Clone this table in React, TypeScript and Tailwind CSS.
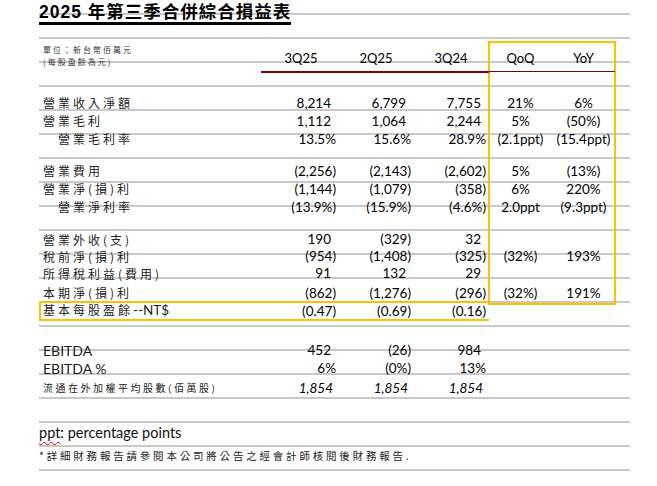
type Row = {
  label: string
  indent?: boolean
  sans?: boolean
  small?: boolean
  italic?: boolean
  values: string[]
  qoq?: string
  yoy?: string
  h: string
  mt?: string
}

const rows: Row[] = [
  { label: '營業收入淨額', values: ['8,214', '6,799', '7,755'], qoq: '21%', yoy: '6%', h: 'h-[18px]', mt: 'mt-[21px]' },
  { label: '營業毛利', values: ['1,112', '1,064', '2,244'], qoq: '5%', yoy: '(50%)', h: 'h-[18px]' },
  { label: '營業毛利率', indent: true, values: ['13.5%', '15.6%', '28.9%'], qoq: '(2.1ppt)', yoy: '(15.4ppt)', h: 'h-[18px]' },
  { label: '營業費用', values: ['(2,256)', '(2,143)', '(2,602)'], qoq: '5%', yoy: '(13%)', h: 'h-[18px]', mt: 'mt-[14px]' },
  { label: '營業淨(損)利', values: ['(1,144)', '(1,079)', '(358)'], qoq: '6%', yoy: '220%', h: 'h-[18px]' },
  { label: '營業淨利率', indent: true, values: ['(13.9%)', '(15.9%)', '(4.6%)'], qoq: '2.0ppt', yoy: '(9.3ppt)', h: 'h-[18px]' },
  { label: '營業外收(支)', values: ['190', '(329)', '32'], h: 'h-[17px]', mt: 'mt-[15px]' },
  { label: '稅前淨(損)利', values: ['(954)', '(1,408)', '(325)'], qoq: '(32%)', yoy: '193%', h: 'h-[17px]' },
  { label: '所得稅利益(費用)', values: ['91', '132', '29'], h: 'h-[17px]' },
  { label: '本期淨(損)利', values: ['(862)', '(1,276)', '(296)'], qoq: '(32%)', yoy: '191%', h: 'h-[16px]', mt: 'mt-[3px]' },
]

const lower: Row[] = [
  { label: 'EBITDA', sans: true, values: ['452', '(26)', '984'], h: 'h-[18px]', mt: 'mt-[20px]' },
  { label: 'EBITDA %', sans: true, values: ['6%', '(0%)', '13%'], h: 'h-[18px]' },
  { label: '流通在外加權平均股數(佰萬股)', small: true, italic: true, values: ['1,854', '1,854', '1,854'], h: 'h-[18px]', mt: 'mt-[2px]' },
]

const cjk = "font-['Noto_Sans_CJK_TC','Liberation_Sans',sans-serif]"

function Num({ value, italic }: { value: string; italic?: boolean }) {
  const tight = value.endsWith(')') || value.endsWith('%')
  const pad = italic ? 'pr-[3px] italic' : tight ? 'pr-0' : 'pr-[5px]'
  return <div className={`w-[75px] text-right ${pad}`}>{value}</div>
}

function Label({ row }: { row: Row }) {
  if (row.sans) {
    return <div className="w-[222px] pl-[4px] text-[14px] text-[#1a1a1a]">{row.label}</div>
  }
  const size = row.small ? 'text-[10px] tracking-[2.5px]' : 'text-[12px] tracking-[3px]'
  return (
    <div className={`w-[222px] ${row.indent ? 'pl-[19px]' : 'pl-[4px]'} ${cjk} ${size} leading-none text-[#222]`}>
      {row.label}
    </div>
  )
}

function DataRow({ row }: { row: Row }) {
  return (
    <div className={`flex items-center ${row.h} ${row.mt ?? ''}`}>
      <Label row={row} />
      {row.values.map((v, i) => (
        <Num key={i} value={v} italic={row.italic} />
      ))}
      <div className="ml-[3px] w-[63px] text-center">{row.qoq ?? ''}</div>
      <div className="w-[63px] text-center">{row.yoy ?? ''}</div>
    </div>
  )
}

export default function App() {
  return (
    <div className="relative h-[486px] w-[657px] overflow-hidden bg-white font-['Lato',sans-serif] text-[13.5px] text-black">
      {/* ruled lines */}
      <div className="absolute left-[39px] top-[13px] h-[458px] w-[591px] bg-[repeating-linear-gradient(to_bottom,#c8c8c8_0,#c8c8c8_2px,transparent_2px,transparent_24px)]" />
      {/* QoQ / YoY highlight */}
      <div className="absolute left-[488px] top-[41px] h-[264px] w-[128px] border-2 border-[#ffc000]" />

      <div className="relative pl-[39px]">
        <div className="pt-[2px]">
          <span className="inline-block border-b-[3px] border-black font-['Liberation_Sans','Noto_Sans_CJK_TC',sans-serif] text-[17.5px] font-bold leading-[20px] tracking-[1px]">
            2025 年第三季合併綜合損益表
          </span>
        </div>

        <div className="mt-[19px] flex items-start">
          <div className={`w-[222px] pl-[4px] ${cjk} text-[8px] leading-[12px] tracking-[2px] text-[#333]`}>
            <div>單位：新台幣佰萬元</div>
            <div>(每股盈餘為元)</div>
          </div>
          <div className="flex h-[29px] border-b-2 border-[#800000] pt-[6px] text-[13px] leading-[16px]">
            <div className="w-[75px] pl-[5px] text-center">3Q25</div>
            <div className="w-[75px] pl-[5px] text-center">2Q25</div>
            <div className="w-[78px] pl-[2px] text-center">3Q24</div>
          </div>
          <div className="flex h-[29px] pt-[6px] text-[13px] leading-[16px]">
            <div className="flex h-[22px] w-[126px] border-b border-[#800000]">
              <div className="w-[63px] text-center">QoQ</div>
              <div className="w-[63px] text-center">YoY</div>
            </div>
          </div>
        </div>

        {rows.map((r, i) => (
          <DataRow key={i} row={r} />
        ))}

        <div className="flex h-[20px] w-[450px] items-center border-y-2 border-l-2 border-[#ffc000]">
          <div className="w-[220px] pl-[2px] leading-none text-[#222]">
            <span className={`${cjk} text-[12px] tracking-[3px]`}>基本每股盈餘</span>
            <span className="text-[13.5px]">--NT$</span>
          </div>
          <Num value="(0.47)" />
          <Num value="(0.69)" />
          <Num value="(0.16)" />
        </div>

        {lower.map((r, i) => (
          <DataRow key={i} row={r} />
        ))}

        <div className="mt-[26px] flex h-[20px] items-center text-[14.5px] text-[#111]">
          <span className="underline decoration-[#e00000] decoration-wavy decoration-1 underline-offset-[3px]">ppt</span>
          <span>: percentage points</span>
        </div>

        <div className={`mt-[4px] flex h-[18px] items-center ${cjk} text-[10.5px] tracking-[2.8px] text-[#222]`}>
          *詳細財務報告請參閱本公司將公告之經會計師核閱後財務報告.
        </div>
      </div>
    </div>
  )
}
